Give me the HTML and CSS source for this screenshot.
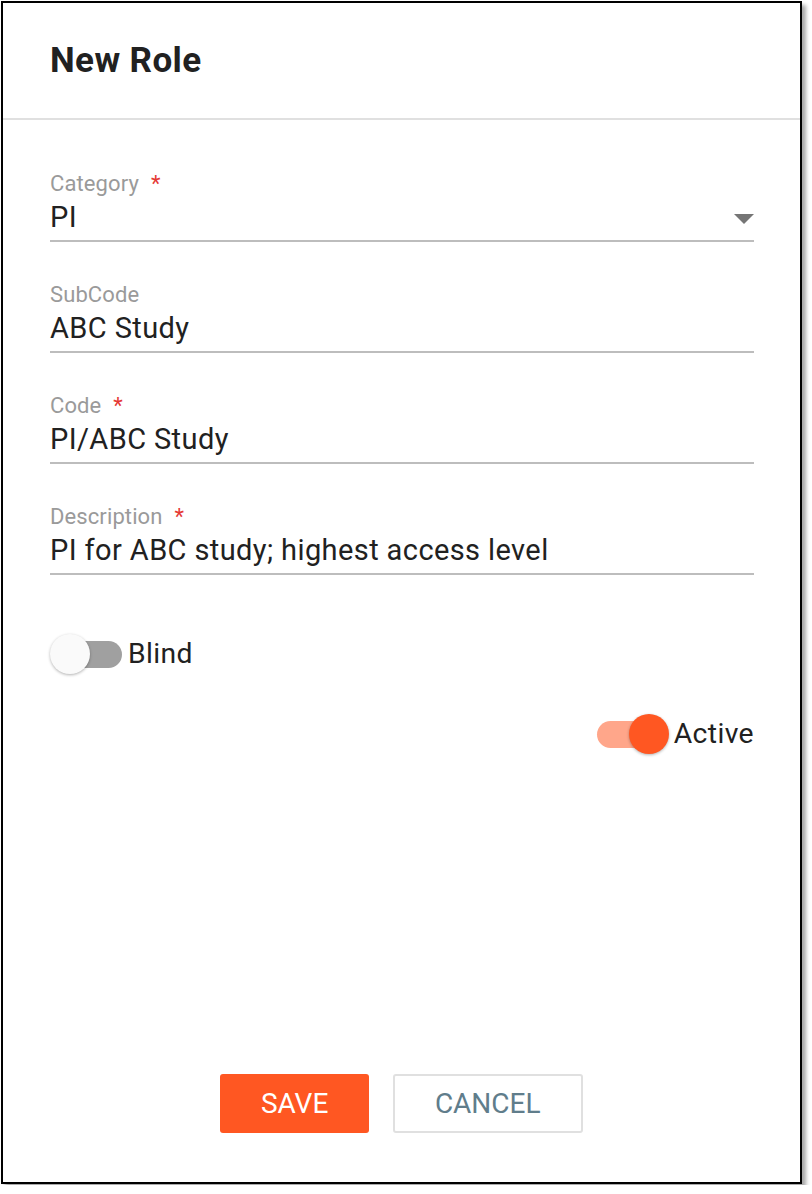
FILE: index.html
```html
<!DOCTYPE html>
<html lang="en">
<head>
<meta charset="utf-8">
<title>New Role</title>
<link rel="stylesheet" href="styles.css">
</head>
<body>
<div class="dialog">
  <div class="dialog-header">
    <h1 class="dialog-title">New Role</h1>
  </div>
  <div class="dialog-body">
    <div class="field">
      <div class="field-label">Category<span class="req">*</span></div>
      <div class="field-input select">
        <span class="field-value">PI</span>
        <span class="caret"></span>
      </div>
    </div>
    <div class="field">
      <div class="field-label">SubCode</div>
      <div class="field-input"><span class="field-value">ABC Study</span></div>
    </div>
    <div class="field">
      <div class="field-label">Code<span class="req">*</span></div>
      <div class="field-input"><span class="field-value">PI/ABC Study</span></div>
    </div>
    <div class="field">
      <div class="field-label">Description<span class="req">*</span></div>
      <div class="field-input"><span class="field-value">PI for ABC study; highest access level</span></div>
    </div>

    <div class="toggle-row first">
      <span class="switch off"><span class="track"></span><span class="thumb"></span></span>
      <span class="toggle-label">Blind</span>
    </div>
    <div class="toggle-row end">
      <span class="switch on"><span class="track"></span><span class="thumb"></span></span>
      <span class="toggle-label">Active</span>
    </div>
  </div>
  <div class="dialog-footer">
    <button class="btn btn-primary">SAVE</button>
    <button class="btn btn-outline">CANCEL</button>
  </div>
</div>
</body>
</html>
```
FILE: styles.css
```css
* { box-sizing: border-box; }

html, body {
  margin: 0;
  background: #fff;
}

body {
  padding: 1px;
  font-family: Roboto, "Noto Sans", "Liberation Sans", sans-serif;
  color: #212121;
}

.dialog {
  width: 801px;
  height: 1183px;
  border: 2px solid #000;
  background: #fff;
  display: flex;
  flex-direction: column;
  box-shadow: 4px 4px 4px rgba(0, 0, 0, 0.35);
}

.dialog-header {
  height: 117px;
  padding: 37px 47px 0;
  border-bottom: 2px solid #e0e0e0;
}

.dialog-title {
  margin: 0;
  font-size: 35px;
  line-height: 41px;
  font-weight: 700;
  letter-spacing: 0.4px;
  color: #212121;
}

.dialog-body {
  padding: 51px 46px 0 47px;
  display: flex;
  flex-direction: column;
}

.field {
  display: flex;
  flex-direction: column;
  margin-bottom: 40px;
}

.field-label {
  font-size: 22px;
  line-height: 26px;
  letter-spacing: 0.1px;
  color: #9a9a9a;
}

.req {
  color: #e53935;
  margin-left: 12px;
}

.field-input {
  margin-top: 3px;
  padding-bottom: 6px;
  border-bottom: 2px solid #bdbdbd;
  display: flex;
  align-items: center;
}

.field-value {
  flex: 1;
  font-size: 29px;
  line-height: 34px;
  letter-spacing: 0.4px;
  color: #212121;
}

.caret {
  width: 0;
  height: 0;
  margin-top: 4px;
  border-left: 10px solid transparent;
  border-right: 10px solid transparent;
  border-top: 10px solid #757575;
}

.toggle-row {
  display: flex;
  align-items: center;
  gap: 6px;
  height: 40px;
}

.toggle-row.first {
  margin-top: 19px;
}

.toggle-row.end {
  margin-top: 40px;
  justify-content: flex-end;
  gap: 5px;
}

.toggle-label {
  font-size: 28.3px;
  line-height: 34px;
  letter-spacing: 0.4px;
  color: #212121;
}

.switch {
  position: relative;
  width: 72px;
  height: 40px;
  flex: none;
}

.switch .track {
  position: absolute;
  top: 6.5px;
  width: 65px;
  height: 27px;
  border-radius: 14px;
}

.switch .thumb {
  position: absolute;
  top: 0;
  width: 40px;
  height: 40px;
  border-radius: 50%;
  box-shadow: 0 1px 3px rgba(0, 0, 0, 0.3);
}

.switch.off .track { left: 7px; background: #a0a0a0; }
.switch.off .thumb { left: 0; background: #fafafa; }
.switch.on .track { left: 0; background: #ffa68a; }
.switch.on .thumb { left: 32px; background: #ff5722; }

.dialog-footer {
  margin-top: auto;
  padding-bottom: 49px;
  display: flex;
  justify-content: center;
  gap: 24px;
}

.btn {
  height: 59px;
  padding: 0 40px;
  border-radius: 3px;
  font-family: Roboto, "Noto Sans", sans-serif;
  font-size: 28px;
  line-height: 34px;
  font-weight: 400;
  cursor: pointer;
}

.btn-primary {
  background: #ff5722;
  color: #fff;
  border: 0;
  padding: 0 40.5px;
}

.btn-outline {
  background: #fff;
  color: #607d8b;
  border: 2px solid #e0e0e0;
}
```
